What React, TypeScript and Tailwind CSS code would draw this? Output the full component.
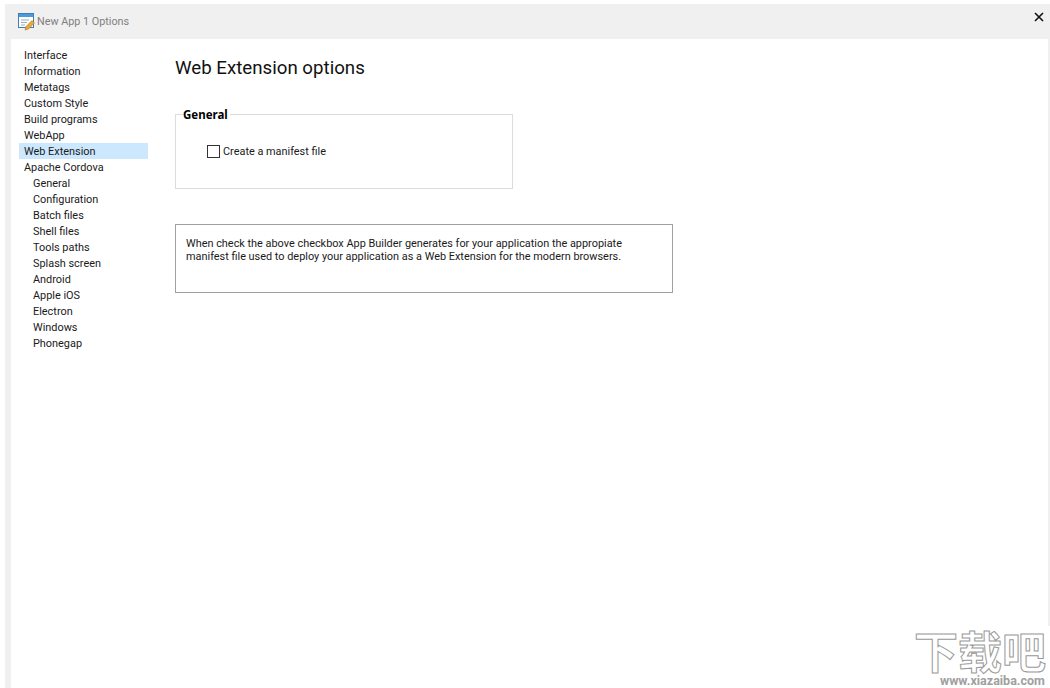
import React from "react";

const items: [string, boolean][] = [
  ["Interface", false], ["Information", false], ["Metatags", false], ["Custom Style", false],
  ["Build programs", false], ["WebApp", false], ["Web Extension", false], ["Apache Cordova", false],
  ["General", true], ["Configuration", true], ["Batch files", true], ["Shell files", true],
  ["Tools paths", true], ["Splash screen", true], ["Android", true], ["Apple iOS", true],
  ["Electron", true], ["Windows", true], ["Phonegap", true],
];

function AppIcon() {
  return (
    <svg width="18" height="18" viewBox="0 0 18 18" className="shrink-0">
      <rect x="0.5" y="0.5" width="15" height="14" fill="#fff" stroke="#3f7fb5" />
      <rect x="1" y="1" width="14" height="3" fill="#4a9bd8" />
      <path d="M3 7h8M3 9.5h6M3 12h4" stroke="#9ab" strokeWidth="1" />
      <path d="M7 17l1-3.5 6-6 2.5 2.5-6 6z" fill="#e9a93a" stroke="#a87420" strokeWidth="0.6" />
    </svg>
  );
}

export default function App() {
  return (
    <div className="relative w-[1050px] h-[688px] overflow-hidden bg-white pt-[4px] pl-[5px] font-['Roboto',sans-serif] text-black">
      <div className="flex flex-col h-[684px] w-[1045px] bg-[#f0f0f0]">
        <div className="flex items-center h-[35px] shrink-0 pl-[13px] pr-[5px] pt-[1px]">
          <AppIcon />
          <span className="ml-[1px] text-[10.8px] text-[#7f7f7f]">New App 1 Options</span>
          <svg width="10" height="10" viewBox="0 0 10 10" className="ml-auto mr-[1px] mb-[11px]">
            <path d="M1 1l8 8M9 1l-8 8" stroke="#111" strokeWidth="1.6" />
          </svg>
        </div>
        <div className="flex flex-1 ml-[6px] mr-[2px] bg-white">
          <nav className="w-[137px] shrink-0 pt-[8px] pl-[8px]">
            {items.map(([label, sub]) => (
              <div
                key={label}
                className={`h-[16px] pt-[1px] leading-[16px] text-[10.9px] text-[#1a1a1a] ${sub ? "pl-[14px]" : "pl-[5px]"} ${label === "Web Extension" ? "bg-[#cce8ff]" : ""}`}
              >
                {label}
              </div>
            ))}
          </nav>
          <main className="pl-[27px] pt-[15px]">
            <h1 className="text-[18.7px] leading-[28px] text-[#111]">Web Extension options</h1>
            <fieldset className="mt-[23px] w-[338px] h-[84px] border border-[#dcdcdc] pl-[7px] m-0">
              <legend className="pt-[3px] pb-[1px] text-[11.5px] leading-[14px] font-bold font-['Noto_Sans',sans-serif] px-0 pr-[2px]">General</legend>
              <label className="flex items-center mt-[20px] ml-[24px] text-[10.9px] leading-[14px] text-[#1a1a1a]">
                <span className="w-[13px] h-[13px] border border-[#333] bg-white mr-[3px]" />
                <span className="pt-[2px]">Create a manifest file</span>
              </label>
            </fieldset>
            <div className="mt-[35px] w-[498px] h-[69px] border border-[#a0a0a0] pl-[10px] pt-[12px] text-[10.9px] leading-[13px] text-[#1a1a1a]">
              <p className="whitespace-nowrap">When check the above checkbox App Builder generates for your application the appropiate</p>
              <p className="whitespace-nowrap">manifest file used to deploy your application as a Web Extension for the modern browsers.</p>
            </div>
          </main>
        </div>
      </div>
      <div className="absolute left-[914px] top-[626px] w-[136px] h-[62px] bg-white">
        <div className="text-[44px] leading-[48px] font-bold text-white font-['Noto_Sans_CJK_SC',sans-serif] whitespace-nowrap [-webkit-text-stroke:1px_#999999]">下载吧</div>
        <div className="absolute left-[26px] top-[49px] text-[12.5px] leading-[12px] font-bold text-[#a0a0a0] whitespace-nowrap">www.xiazaiba.com</div>
      </div>
    </div>
  );
}
